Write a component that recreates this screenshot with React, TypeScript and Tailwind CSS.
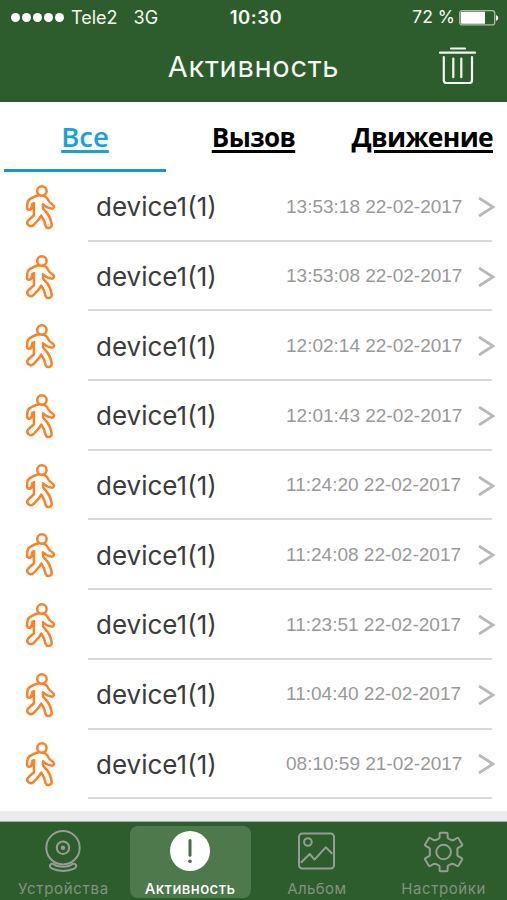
import React from 'react';

const events = [
  '13:53:18 22-02-2017',
  '13:53:08 22-02-2017',
  '12:02:14 22-02-2017',
  '12:01:43 22-02-2017',
  '11:24:20 22-02-2017',
  '11:24:08 22-02-2017',
  '11:23:51 22-02-2017',
  '11:04:40 22-02-2017',
  '08:10:59 21-02-2017',
];

function WalkerIcon() {
  return (
    <svg className="h-[46px] w-8 shrink-0" viewBox="24 184 32 46" fill="none" stroke="#f98128" strokeWidth="2.5" strokeLinejoin="round" strokeLinecap="round">
      <circle cx="41.9" cy="191" r="4.7" />
      <path d="M38.5 195.6 C35 195.9 32 197.9 29.2 199.6 C27.7 200.6 27.5 201.7 27.3 203.7 L27 207.5 C27 210.4 31 210.4 31.7 207.6 L32.2 204.2 L34 203 L33.9 211.5 L34 215.3 L28.4 220.2 C25.3 223.8 29.6 228.2 33.6 225 L39 219.2 L41.2 215.6 L44 220.4 L45.6 226 C47.1 229.6 52.5 228 51.6 223.9 C50.8 220 49.5 216.2 47.2 213.4 L43 208.5 L43 204.2 C45.2 206.8 48.5 208 51.3 208.6 C54.1 208.9 55 206 52.6 204.5 C50.4 203.2 49 202.1 48.2 200.1 C47.1 197.3 45.2 195.8 42.7 195.7" />
    </svg>
  );
}

function TrashIcon() {
  return (
    <svg className="h-10 w-10" viewBox="0 0 40 40" fill="none" stroke="#f4faf2" strokeWidth="2.2" strokeLinecap="round">
      <path d="M13 2.5H27M2 6.7H37M5.8 11V34.2Q5.8 37 8.6 37H31.1Q34 37 34 34.2V11M15.3 12.5V31.2M23.3 12.5V31.2" />
    </svg>
  );
}

function CameraIcon() {
  return (
    <svg className="h-11 w-10" viewBox="0 0 40 44" fill="none" stroke="#969e93" strokeWidth="2">
      <circle cx="20" cy="18.7" r="16.7" />
      <circle cx="20" cy="18.7" r="6.2" />
      <circle cx="20" cy="18.7" r="2.2" fill="#969e93" stroke="none" />
      <path d="M9 34.7C5.8 35.4 6.5 38.5 9.1 39.7C15.3 42.7 25.1 42.7 31.1 39.7C33.8 38.4 34.2 35.4 31 34.7C28.7 34.3 29 36.3 25.8 37C21.8 37.9 18.2 37.9 14.3 37C10.9 36.3 11.2 34.2 9 34.7Z" />
    </svg>
  );
}

function AlertIcon() {
  return (
    <svg className="h-11 w-10" viewBox="0 0 40 44">
      <circle cx="20" cy="21" r="20" fill="white" />
      <path d="M20 10.5V25.2" stroke="#426e43" strokeWidth="3" strokeLinecap="round" />
      <circle cx="20" cy="31.2" r="1.8" fill="#426e43" />
    </svg>
  );
}

function AlbumIcon() {
  return (
    <svg className="h-11 w-10" viewBox="0 0 40 44" fill="none" stroke="#969e93" strokeWidth="2" strokeLinejoin="round">
      <rect x="2" y="4.5" width="35" height="35" rx="3.3" />
      <circle cx="10.9" cy="13" r="3.8" />
      <path d="M3.8 33.8L12.7 25L17.5 30.6L28.7 18.3L35.3 24.8" />
    </svg>
  );
}

function GearIcon() {
  return (
    <svg className="h-11 w-10" viewBox="0.4 0 40 44" fill="none" stroke="#969e93" strokeWidth="2" strokeLinejoin="round">
      <circle cx="20" cy="23" r="7.3" />
      <path transform="translate(0 .5)" d="M16 4Q16 3.2 17 3.2H23Q24 3.2 24 4V7.7Q24 8.8 25.2 9.3L28 10.5Q29.1 11.1 30.2 10.4L33.5 8.5Q34.4 8 34.9 8.9L38.4 14.8Q38.9 15.8 38 16.3L34.5 18.4Q33.5 19 33.7 20.2Q34 22.5 33.7 24.8Q33.5 26 34.5 26.6L38 28.7Q38.9 29.2 38.4 30.2L34.9 36.1Q34.4 37 33.5 36.5L30.2 34.6Q29.1 33.9 28 34.5L25.2 35.7Q24 36.2 24 37.3V41Q24 41.8 23 41.8H17Q16 41.8 16 41V37.3Q16 36.2 14.8 35.7L12 34.5Q10.9 33.9 9.8 34.6L6.5 36.5Q5.6 37 5.1 36.1L1.6 30.2Q1.1 29.2 2 28.7L5.5 26.6Q6.5 26 6.3 24.8Q6 22.5 6.3 20.2Q6.5 19 5.5 18.4L2 16.3Q1.1 15.8 1.6 14.8L5.1 8.9Q5.6 8 6.5 8.5L9.8 10.4Q10.9 11.1 12 10.5L14.8 9.3Q16 8.8 16 7.7Z" />
    </svg>
  );
}

export default function App() {
  return (
    <div className="flex h-[900px] w-[507px] flex-col overflow-hidden bg-white font-['Inter','Liberation_Sans',sans-serif]">
      <header className="flex h-[102px] shrink-0 flex-col bg-[#2d5d2c] text-[#f4faf2]">
        <div className="grid h-[34px] grid-cols-[1fr_60px_1fr] items-center pt-px text-[18px]">
          <div className="flex items-center pl-[11px]">
            <div className="flex gap-[2px]">
              {[0, 1, 2, 3, 4].map((dot) => (
                <span key={dot} className="size-[9px] rounded-full bg-white" />
              ))}
            </div>
            <span className="ml-[7px]">Tele2</span>
            <span className="ml-4">3G</span>
          </div>
          <span className="whitespace-nowrap pl-[5px] text-center text-[18.5px] font-semibold tracking-[0.5px]">10:30</span>
          <div className="flex items-center justify-end pr-[8px]">
            <span className="mr-[4px] text-[17.5px]">72 %</span>
            <svg className="h-4 w-10" viewBox="0 0 40 16">
              <rect x="0.7" y="0.7" width="35" height="14.2" rx="2.5" fill="none" stroke="#a9bea7" strokeWidth="1.3" />
              <path d="M3 1.8H26V13.8H3Q1.8 13.8 1.8 12.6V3Q1.8 1.8 3 1.8Z" fill="white" />
              <path d="M37 5Q39.3 6 39.3 8T37 11Z" fill="white" />
            </svg>
          </div>
        </div>
        <div className="grid h-[64px] grid-cols-[1fr_180px_1fr] items-center">
          <h1 className="col-start-2 whitespace-nowrap text-center text-[29px] leading-none tracking-[0.7px]">Активность</h1>
          <button aria-label="Удалить" className="mr-[29px] justify-self-end"><TrashIcon /></button>
        </div>
      </header>

      <nav className="grid h-[70px] shrink-0 grid-cols-3 font-['Open_Sans','Noto_Sans',sans-serif] text-[27px] font-bold leading-[70px] text-black">
        <div className="pl-1">
          <div className="h-[70px] w-[162px] border-b-[3px] border-[#1597d3] text-center text-[#16a1dc]">
            <span className="text-[27.5px] font-semibold underline decoration-[3px] underline-offset-[3px]">Все</span>
          </div>
        </div>
        <div className="text-center"><span className="text-[26px] tracking-[-0.6px] underline decoration-[3px] underline-offset-[3px]">Вызов</span></div>
        <div className="flex justify-end pr-[14px]"><span className="text-[26.5px] tracking-[-0.7px] underline decoration-[3px] underline-offset-[3px]">Движение</span></div>
      </nav>

      <main className="h-[639px] shrink-0">
        {events.map((time) => (
          <div key={time} className="flex h-[69.7px] items-center pl-6">
            <WalkerIcon />
            <div className="ml-8 mr-[15px] flex h-full flex-1 items-center border-b-2 border-[#d8d8d8] pl-2 pt-[2px]">
              <span className="text-[26px] text-[#3b3b3b]">device1(1)</span>
              <time className="ml-auto mr-[13px] w-[177px] whitespace-nowrap font-['Liberation_Sans',sans-serif] text-[19px] text-[#999999]">{time}</time>
              <svg className="-mr-1 h-5 w-5" viewBox="0 0 20 20" fill="none" stroke="#b9b9b9" strokeWidth="2.8">
                <path d="M3 1L17 10L3 19" />
              </svg>
            </div>
          </div>
        ))}
      </main>

      <footer className="flex h-[89px] shrink-0 flex-col">
        <div className="h-[11px] border-b border-[#a9ada9] bg-[#e9ecea]" />
        <div className="grid h-[78px] grid-cols-4 bg-[#2d5d2c] text-[15px] leading-none text-[#82937f]">
          <div className="flex flex-col items-center pt-[7px]"><CameraIcon /><span className="mt-2 tracking-[0.7px]">Устройства</span></div>
          <div className="flex justify-center pt-1">
            <div className="flex h-[72px] w-[121px] flex-col items-center rounded-lg bg-[#4d794d] pt-[4px] text-white"><AlertIcon /><span className="mt-[7px] font-medium tracking-[0.4px]">Активность</span></div>
          </div>
          <div className="flex flex-col items-center pt-[7px]"><AlbumIcon /><span className="mt-2 tracking-[0.4px]">Альбом</span></div>
          <div className="flex flex-col items-center pt-[7px]"><GearIcon /><span className="mt-2 tracking-[0.6px]">Настройки</span></div>
        </div>
      </footer>
    </div>
  );
}
